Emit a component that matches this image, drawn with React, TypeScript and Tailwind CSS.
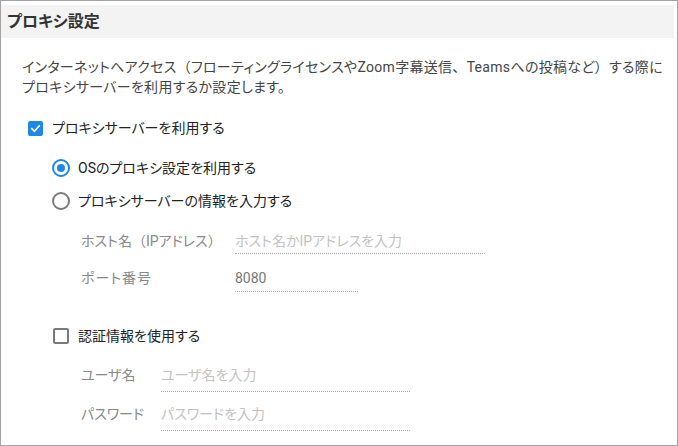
import { useState } from 'react';

function CheckBox({ checked, onChange }: { checked: boolean; onChange: () => void }) {
  return (
    <button
      type="button"
      onClick={onChange}
      className={
        checked
          ? 'w-[15px] h-[15px] rounded-[2px] bg-[#1e88e5] flex items-center justify-center'
          : 'w-[16px] h-[16px] rounded-[2px] border-2 border-[#7a7a7a] bg-white'
      }
    >
      {checked && (
        <svg width="11" height="11" viewBox="0 0 12 12" fill="none">
          <path d="M2 6.2 L4.8 9 L10 3.2" stroke="white" strokeWidth="1.8" strokeLinecap="square" />
        </svg>
      )}
    </button>
  );
}

function Radio({ checked, onChange }: { checked: boolean; onChange: () => void }) {
  return (
    <button
      type="button"
      onClick={onChange}
      className={
        'w-[18px] h-[18px] rounded-full border-2 flex items-center justify-center bg-white ' +
        (checked ? 'border-[#1e88e5]' : 'border-[#7a7a7a]')
      }
    >
      {checked && <span className="w-[8px] h-[8px] rounded-full bg-[#1e88e5]" />}
    </button>
  );
}

// full-width punctuation keeps its spacing
function B({ children }: { children: string }) {
  return <span className="[font-feature-settings:normal]">{children}</span>;
}

export default function App() {
  const [useProxy, setUseProxy] = useState(true);
  const [mode, setMode] = useState<'os' | 'manual'>('os');
  const [useAuth, setUseAuth] = useState(false);
  const [host, setHost] = useState('');
  const [port, setPort] = useState('8080');
  const [user, setUser] = useState('');
  const [pass, setPass] = useState('');

  return (
    <div
      className="w-[678px] h-[446px] bg-white border border-[#a3a3a3] pt-[4px] pr-[3px] overflow-hidden text-[14px] text-[#222] [font-feature-settings:'palt']"
      style={{ fontFamily: 'Roboto, "Noto Sans CJK JP", sans-serif' }}
    >
      <div className="h-[33px] bg-[#f3f3f3] pl-[6px] flex items-center text-[16px] font-bold text-[#333]">
        プロキシ設定
      </div>

      <p className="mt-[19px] ml-[21px] leading-[20px] text-[#444] tracking-[0.3px] whitespace-nowrap">
        インターネットへアクセス<B>（</B>フローティングライセンスやZoom字幕送信<B>、</B>Teamsへの投稿など<B>）</B>する際に
        <br />
        プロキシサーバーを利用するか設定します。
      </p>

      <div className="mt-[21px] ml-[27px] h-[20px] flex items-center gap-[9px]">
        <CheckBox checked={useProxy} onChange={() => setUseProxy(!useProxy)} />
        <span>プロキシサーバーを利用する</span>
      </div>

      <div className="ml-[51px]">
        <div className="mt-[20px] h-[20px] flex items-center gap-[8px]">
          <Radio checked={mode === 'os'} onChange={() => setMode('os')} />
          <span>OSのプロキシ設定を利用する</span>
        </div>
        <div className="mt-[13px] h-[20px] flex items-center gap-[8px]">
          <Radio checked={mode === 'manual'} onChange={() => setMode('manual')} />
          <span>プロキシサーバーの情報を入力する</span>
        </div>

        <div className="ml-[29px] mt-[20px] flex items-start">
          <label className="w-[154px] leading-[20px] text-[#888]">
            ホスト名<B>（</B>IPアドレス<B>）</B>
          </label>
          <input
            className="w-[250px] leading-[20px] pb-[2px] border-b border-dotted border-[#a8a8a8] outline-none placeholder:text-[#c2c2c2] text-[#777]"
            placeholder="ホスト名かIPアドレスを入力"
            value={host}
            onChange={(e) => setHost(e.target.value)}
          />
        </div>
        <div className="ml-[29px] mt-[14px] flex items-start">
          <label className="w-[154px] leading-[20px] text-[#888] tracking-[1px]">ポート番号</label>
          <input
            className="w-[123px] leading-[20px] pb-[3px] border-b border-dotted border-[#a8a8a8] outline-none text-[#777]"
            value={port}
            onChange={(e) => setPort(e.target.value)}
          />
        </div>

        <div className="mt-[34px] h-[20px] flex items-center gap-[9px] ml-[1px]">
          <CheckBox checked={useAuth} onChange={() => setUseAuth(!useAuth)} />
          <span>認証情報を使用する</span>
        </div>

        <div className="ml-[29px] mt-[19px] flex items-start">
          <label className="w-[80px] leading-[20px] text-[#888]">ユーザ名</label>
          <input
            className="w-[249px] leading-[20px] pb-[6px] border-b border-dotted border-[#a8a8a8] outline-none placeholder:text-[#c2c2c2] text-[#777]"
            placeholder="ユーザ名を入力"
            value={user}
            onChange={(e) => setUser(e.target.value)}
          />
        </div>
        <div className="ml-[29px] mt-[12px] flex items-start">
          <label className="w-[80px] leading-[20px] text-[#888]">パスワード</label>
          <input
            type="text"
            className="w-[249px] leading-[20px] pb-[6px] border-b border-dotted border-[#a8a8a8] outline-none placeholder:text-[#c2c2c2] text-[#777]"
            placeholder="パスワードを入力"
            value={pass}
            onChange={(e) => setPass(e.target.value)}
          />
        </div>
      </div>
    </div>
  );
}
